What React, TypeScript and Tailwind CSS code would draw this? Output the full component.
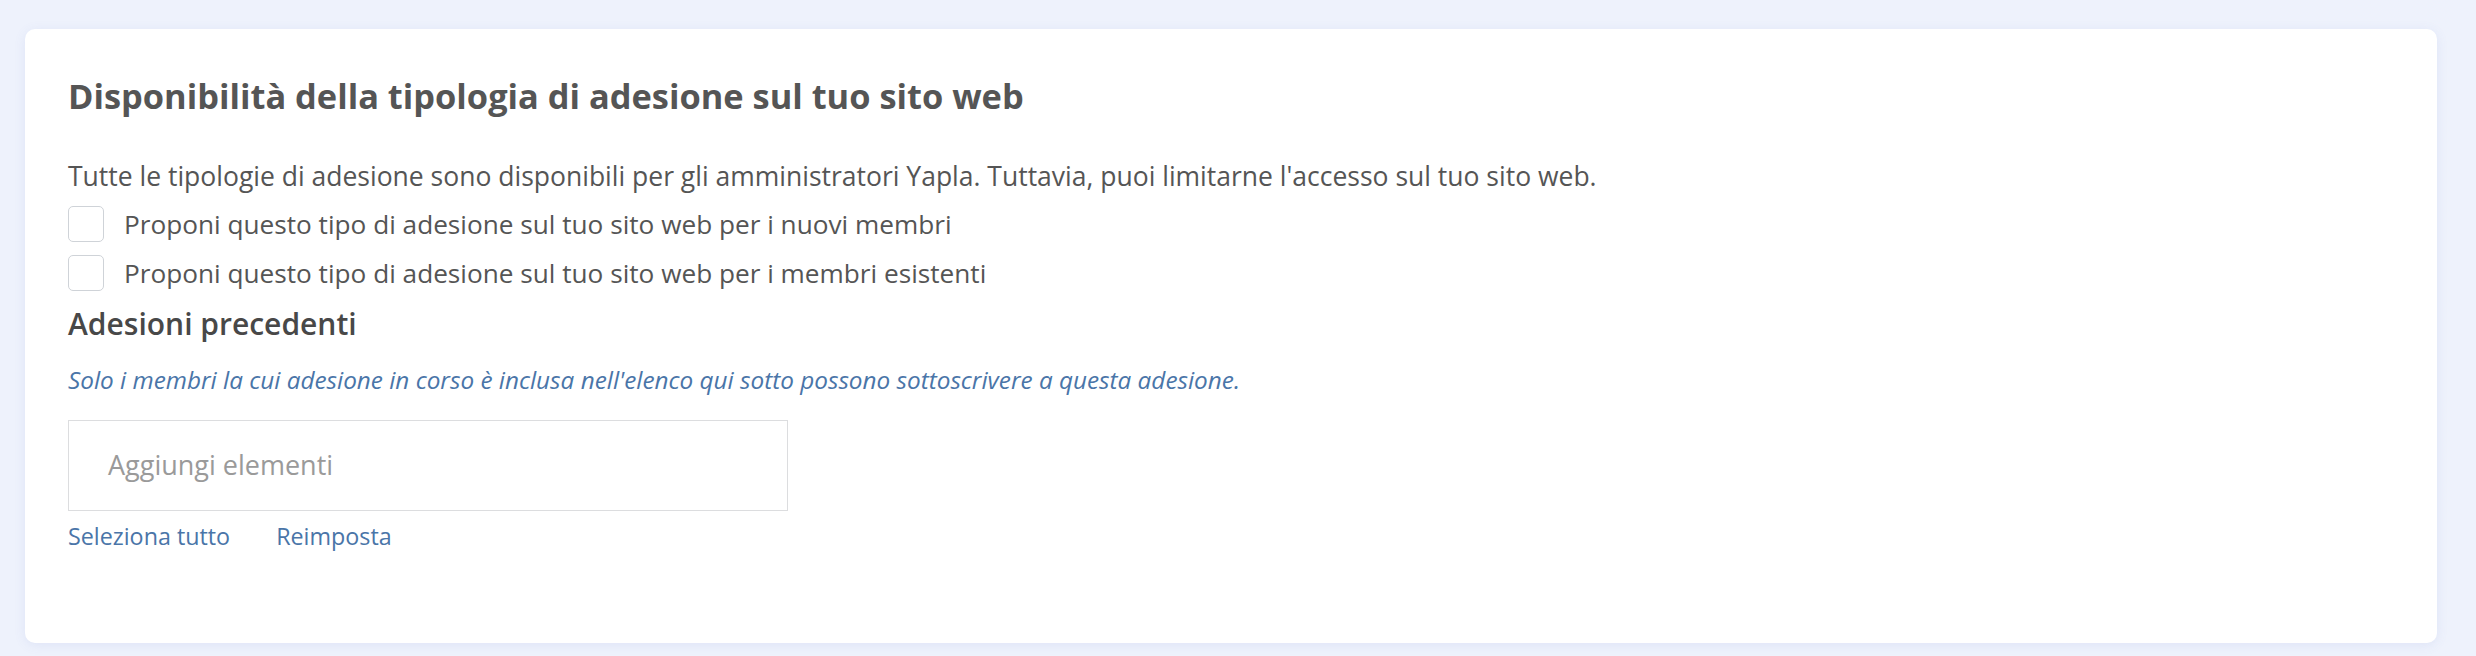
export default function App() {
  return (
    <div className="min-h-[656px] bg-[#eef2fc] pl-[25px] pr-[39px] pt-[29px] font-['Open_Sans','Liberation_Sans',sans-serif]">
      <section className="h-[614px] rounded-[10px] bg-white px-[43px] pt-[47px] shadow-[0_2px_12px_rgba(90,110,200,0.10)]">
        <h2 className="text-[34.4px] font-bold leading-[40px] text-[#555]">
          Disponibilità della tipologia di adesione sul tuo sito web
        </h2>

        <p className="mt-[40px] text-[26.5px] leading-[40px] text-[#555]">
          Tutte le tipologie di adesione sono disponibili per gli amministratori Yapla. Tuttavia, puoi limitarne l'accesso sul tuo sito web.
        </p>

        <div className="mt-[10px] flex flex-col gap-[13px]">
          <label className="flex items-center gap-[20px] text-[26.2px] leading-[36px] text-[#555]">
            <span className="h-[36px] w-[36px] shrink-0 rounded-[5px] border border-[#cfd3d8] bg-white" />
            Proponi questo tipo di adesione sul tuo sito web per i nuovi membri
          </label>
          <label className="flex items-center gap-[20px] text-[26.2px] leading-[36px] text-[#555]">
            <span className="h-[36px] w-[36px] shrink-0 rounded-[5px] border border-[#cfd3d8] bg-white" />
            Proponi questo tipo di adesione sul tuo sito web per i membri esistenti
          </label>
        </div>

        <h3 className="mt-[13px] text-[30px] font-semibold leading-[40px] text-[#484848]">
          Adesioni precedenti
        </h3>

        <p className="mt-[20px] text-[24.3px] italic leading-[32px] text-[#4a75a8]">
          Solo i membri la cui adesione in corso è inclusa nell'elenco qui sotto possono sottoscrivere a questa adesione.
        </p>

        <div className="mt-[24px] flex h-[91px] w-[720px] items-center border-[1.5px] border-[#dcdddf] pl-[39px] text-[27px] text-[#9a9a9a]">
          Aggiungi elementi
        </div>

        <div className="mt-[8px] flex gap-[46px] text-[23.3px] text-[#4a75a8]">
          <button type="button">Seleziona tutto</button>
          <button type="button">Reimposta</button>
        </div>
      </section>
    </div>
  );
}
